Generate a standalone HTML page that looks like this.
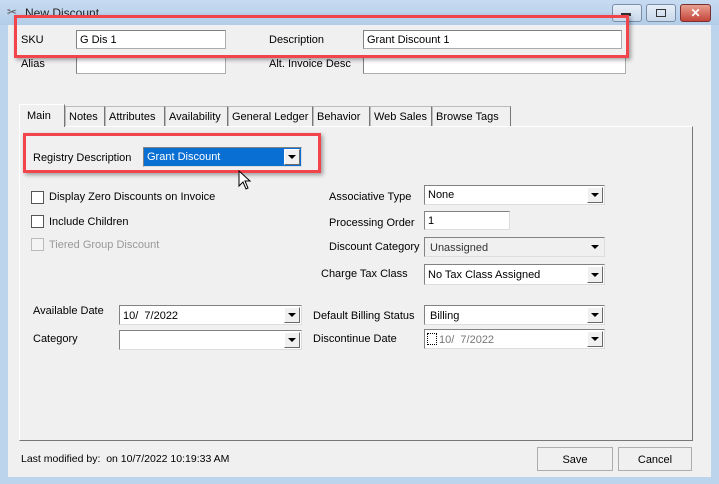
<!DOCTYPE html>
<html><head><style>
*{box-sizing:border-box}
body{margin:0;width:719px;height:484px;overflow:hidden;background:#bcd4ec;font-family:"Liberation Sans",sans-serif;font-size:11px;color:#000;position:relative}
.a{position:absolute}
.client{left:8px;top:25px;width:703px;height:452px;background:#f0f0f0}
.inp{position:absolute;background:#fff;border:1px solid #adadad;border-top-color:#828282;border-left-color:#828282;padding:3px 3px 0;white-space:nowrap;overflow:hidden}
.cb{position:absolute;background:#fff;border:1px solid #828282;border-right-color:#ddd;border-bottom-color:#ddd;padding:4px 3px 0;white-space:nowrap}
.btn{position:absolute;right:1px;top:1px;bottom:1px;width:16px;background:#f0f0f0;border:1px solid #fff;border-right-color:#696969;border-bottom-color:#696969}
.btn:after{content:"";position:absolute;left:3px;top:50%;margin-top:-2px;border-left:4px solid transparent;border-right:4px solid transparent;border-top:4px solid #000}
.tab{position:absolute;top:106px;height:20px;border:1px solid #bbb;border-bottom:none;border-right-color:#777;padding:4px 3px;background:#f0f0f0}
.chk{position:absolute;width:13px;height:13px;background:#fff;border:1px solid #555}
.pb{position:absolute;background:#f0f0f0;border:1px solid #adadad;text-align:center;padding-top:6px;font-size:11px}
.red{position:absolute;border:3px solid #f2444b;box-shadow:2px 2px 4px rgba(0,0,0,.35)}
</style></head><body>
<div class="a" style="left:0;top:0;width:719px;height:25px;background:linear-gradient(#c7dbf1,#b3cde8)"></div>
<div class="a" style="left:7px;top:5px;font-size:12px;color:#555">✂</div>
<div class="a" style="left:25px;top:6px;font-size:12px;color:#222">New Discount</div>
<div class="a" style="left:612px;top:4px;width:30px;height:18px;border:1px solid #7a8ea8;border-radius:3px;background:linear-gradient(#e6eef8,#c9d8ea)"></div>
<div class="a" style="left:621px;top:13px;width:10px;height:3px;background:#333"></div>
<div class="a" style="left:646px;top:4px;width:30px;height:18px;border:1px solid #7a8ea8;border-radius:3px;background:linear-gradient(#e6eef8,#c9d8ea)"></div>
<div class="a" style="left:656px;top:9px;width:10px;height:8px;border:1px solid #333"></div>
<div class="a" style="left:680px;top:4px;width:31px;height:18px;border:1px solid #7a3030;border-radius:3px;background:linear-gradient(#e8a090,#c4453a);color:#fff;text-align:center;font-weight:bold;font-size:12px;line-height:16px">✕</div>
<div class="a client"></div>

<div class="a" style="left:21px;top:34px">SKU</div>
<div class="inp" style="left:76px;top:30px;width:150px;height:19px">G Dis 1</div>
<div class="a" style="left:269px;top:34px">Description</div>
<div class="inp" style="left:363px;top:30px;width:259px;height:19px">Grant Discount 1</div>
<div class="a" style="left:21px;top:58px">Alias</div>
<div class="inp" style="left:76px;top:55px;width:150px;height:19px"></div>
<div class="a" style="left:269px;top:58px">Alt. Invoice Desc</div>
<div class="inp" style="left:363px;top:55px;width:263px;height:19px"></div>
<div class="red" style="left:14px;top:15px;width:615px;height:43px"></div>

<div class="a" style="left:19px;top:126px;width:674px;height:315px;border:1px solid #fff;border-right-color:#777;border-bottom-color:#777"></div>
<div class="tab" style="left:65px;width:40px">Notes</div>
<div class="tab" style="left:105px;width:60px">Attributes</div>
<div class="tab" style="left:165px;width:63px">Availability</div>
<div class="tab" style="left:228px;width:85px">General Ledger</div>
<div class="tab" style="left:313px;width:57px">Behavior</div>
<div class="tab" style="left:370px;width:62px">Web Sales</div>
<div class="tab" style="left:432px;width:79px">Browse Tags</div>
<div class="tab" style="left:19px;top:104px;width:46px;height:23px;border-color:#fff;border-right-color:#777;padding-top:5px;padding-left:7px">Main</div>

<div class="a" style="left:33px;top:152px">Registry Description</div>
<div class="cb" style="left:143px;top:147px;width:159px;height:20px;background:#0a6fd3;color:#fff;padding-top:3px">Grant Discount<div class="btn"></div></div>
<div class="red" style="left:23px;top:133px;width:298px;height:40px"></div>
<svg class="a" style="left:238px;top:170px" width="14" height="20" viewBox="0 0 14 20"><path d="M1 1 L1 16 L5 12 L8 19 L10 18 L7 11 L12 11 Z" fill="#fff" stroke="#000" stroke-width="1"/></svg>

<div class="chk" style="left:31px;top:191px"></div><div class="a" style="left:49px;top:191px">Display Zero Discounts on Invoice</div>
<div class="chk" style="left:31px;top:215px"></div><div class="a" style="left:49px;top:216px">Include Children</div>
<div class="chk" style="left:31px;top:238px;border-color:#bbb;background:#f4f4f4"></div><div class="a" style="left:49px;top:239px;color:#999">Tiered Group Discount</div>

<div class="a" style="left:329px;top:191px">Associative Type</div>
<div class="cb" style="left:424px;top:185px;width:181px;height:20px;padding-top:3px">None<div class="btn"></div></div>
<div class="a" style="left:329px;top:217px">Processing Order</div>
<div class="inp" style="left:424px;top:211px;width:86px;height:19px;border-color:#828282 #ddd #ddd #828282">1</div>
<div class="a" style="left:329px;top:241px">Discount Category</div>
<div class="cb" style="left:424px;top:237px;width:181px;height:20px;background:#f0f0f0;color:#333;padding-left:5px">Unassigned<div class="btn" style="border-color:#f0f0f0"></div></div>
<div class="a" style="left:321px;top:268px">Charge Tax Class</div>
<div class="cb" style="left:424px;top:264px;width:181px;height:21px">No Tax Class Assigned<div class="btn"></div></div>

<div class="a" style="left:33px;top:305px">Available Date</div>
<div class="cb" style="left:119px;top:305px;width:183px;height:20px">10/&nbsp; 7/2022<div class="btn"></div></div>
<div class="a" style="left:33px;top:333px">Category</div>
<div class="cb" style="left:119px;top:330px;width:183px;height:20px"><div class="btn"></div></div>
<div class="a" style="left:313px;top:310px">Default Billing Status</div>
<div class="cb" style="left:424px;top:305px;width:181px;height:20px;padding-left:5px">Billing<div class="btn"></div></div>
<div class="a" style="left:313px;top:333px">Discontinue Date</div>
<div class="cb" style="left:424px;top:329px;width:181px;height:20px;color:#777;padding-left:14px">10/&nbsp; 7/2022<div class="a" style="left:2px;top:3px;width:10px;height:12px;border:1px dotted #000"></div><div class="btn"></div></div>

<div class="a" style="left:21px;top:453px;font-size:10.5px">Last modified by:&nbsp; on 10/7/2022 10:19:33 AM</div>
<div class="pb" style="left:537px;top:447px;width:76px;height:24px">Save</div>
<div class="pb" style="left:618px;top:447px;width:74px;height:24px">Cancel</div>
</body></html>
